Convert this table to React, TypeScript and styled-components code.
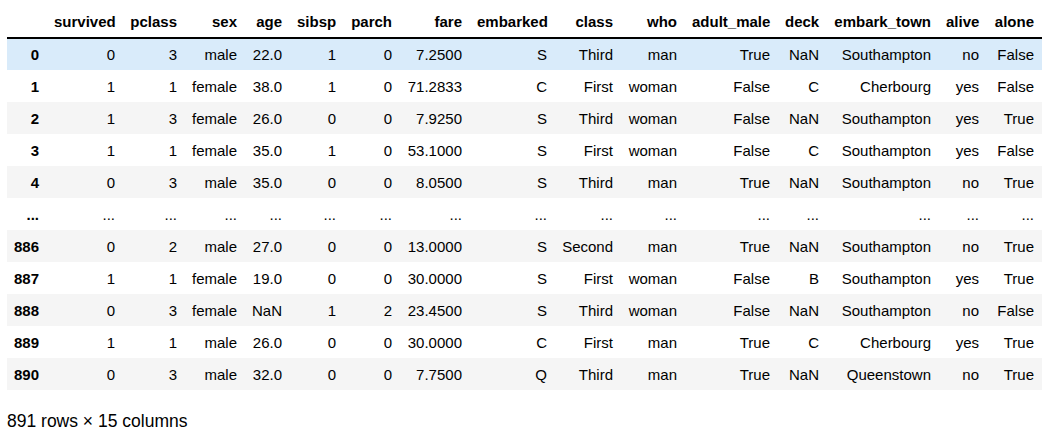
import React from 'react';
import styled, { createGlobalStyle } from 'styled-components';

const Global = createGlobalStyle`
  html, body { margin: 0; padding: 0; background: #fff; }
  body { font-family: "Liberation Sans", Arial, sans-serif; color: #000; }
`;

const Output = styled.div`
  padding: 4px 0 0 7px;
`;

const Table = styled.table`
  border-collapse: collapse;
  border-spacing: 0;
  border: none;
  table-layout: fixed;
  width: 1035px;
  font-size: 15px;
  line-height: normal;
  color: #000;
`;

const Col = styled.col<{ $w: number }>`
  width: ${(p) => p.$w}px;
`;

const HeadRow = styled.tr`
  height: 34px;
`;

const HeadCell = styled.th`
  text-align: right;
  font-weight: bold;
  padding: 2px 8px 0 7px;
  border-bottom: 2px solid #000;
  vertical-align: middle;
  white-space: nowrap;
`;

const Row = styled.tr<{ $bg: string }>`
  height: 32px;
  background: ${(p) => p.$bg};
`;

const IndexCell = styled.th`
  font-weight: bold;
  text-align: right;
  padding: 0 8px 0 7px;
  vertical-align: middle;
  white-space: nowrap;
`;

const Cell = styled.td`
  text-align: right;
  padding: 0 8px 0 7px;
  vertical-align: middle;
  white-space: nowrap;
`;

const Footer = styled.p`
  margin: 19px 0 0 0;
  font-size: 17.5px;
  line-height: 25px;
  color: #000;
`;

const columns = [
  'survived', 'pclass', 'sex', 'age', 'sibsp', 'parch', 'fare', 'embarked',
  'class', 'who', 'adult_male', 'deck', 'embark_town', 'alive', 'alone',
];

const widths = [40, 76, 62, 60, 45, 54, 56, 70, 85, 66, 64, 93, 49, 112, 48, 55];

const rows: string[][] = [
  ['0', '0', '3', 'male', '22.0', '1', '0', '7.2500', 'S', 'Third', 'man', 'True', 'NaN', 'Southampton', 'no', 'False'],
  ['1', '1', '1', 'female', '38.0', '1', '0', '71.2833', 'C', 'First', 'woman', 'False', 'C', 'Cherbourg', 'yes', 'False'],
  ['2', '1', '3', 'female', '26.0', '0', '0', '7.9250', 'S', 'Third', 'woman', 'False', 'NaN', 'Southampton', 'yes', 'True'],
  ['3', '1', '1', 'female', '35.0', '1', '0', '53.1000', 'S', 'First', 'woman', 'False', 'C', 'Southampton', 'yes', 'False'],
  ['4', '0', '3', 'male', '35.0', '0', '0', '8.0500', 'S', 'Third', 'man', 'True', 'NaN', 'Southampton', 'no', 'True'],
  ['...', '...', '...', '...', '...', '...', '...', '...', '...', '...', '...', '...', '...', '...', '...', '...'],
  ['886', '0', '2', 'male', '27.0', '0', '0', '13.0000', 'S', 'Second', 'man', 'True', 'NaN', 'Southampton', 'no', 'True'],
  ['887', '1', '1', 'female', '19.0', '0', '0', '30.0000', 'S', 'First', 'woman', 'False', 'B', 'Southampton', 'yes', 'True'],
  ['888', '0', '3', 'female', 'NaN', '1', '2', '23.4500', 'S', 'Third', 'woman', 'False', 'NaN', 'Southampton', 'no', 'False'],
  ['889', '1', '1', 'male', '26.0', '0', '0', '30.0000', 'C', 'First', 'man', 'True', 'C', 'Cherbourg', 'yes', 'True'],
  ['890', '0', '3', 'male', '32.0', '0', '0', '7.7500', 'Q', 'Third', 'man', 'True', 'NaN', 'Queenstown', 'no', 'True'],
];

const rowBg = (i: number) => {
  if (i === 0) return '#d9ebfa';
  return i % 2 === 0 ? '#f5f5f5' : '#ffffff';
};

export default function App() {
  return (
    <>
      <Global />
      <Output>
        <Table>
          <colgroup>
            {widths.map((w, i) => (
              <Col key={i} $w={w} />
            ))}
          </colgroup>
          <thead>
            <HeadRow>
              <HeadCell />
              {columns.map((c) => (
                <HeadCell key={c}>{c}</HeadCell>
              ))}
            </HeadRow>
          </thead>
          <tbody>
            {rows.map((r, i) => (
              <Row key={i} $bg={rowBg(i)}>
                <IndexCell>{r[0]}</IndexCell>
                {r.slice(1).map((v, j) => (
                  <Cell key={j}>{v}</Cell>
                ))}
              </Row>
            ))}
          </tbody>
        </Table>
        <Footer>891 rows × 15 columns</Footer>
      </Output>
    </>
  );
}
